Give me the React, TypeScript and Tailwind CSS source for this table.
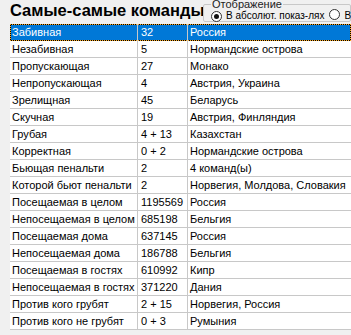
import React from "react";

const rows: [string, string, string][] = [
  ["Забивная", "32", "Россия"],
  ["Незабивная", "5", "Нормандские острова"],
  ["Пропускающая", "27", "Монако"],
  ["Непропускающая", "4", "Австрия, Украина"],
  ["Зрелищная", "45", "Беларусь"],
  ["Скучная", "19", "Австрия, Финляндия"],
  ["Грубая", "4 + 13", "Казахстан"],
  ["Корректная", "0 + 2", "Нормандские острова"],
  ["Бьющая пенальти", "2", "4 команд(ы)"],
  ["Которой бьют пенальти", "2", "Норвегия, Молдова, Словакия"],
  ["Посещаемая в целом", "1195569", "Россия"],
  ["Непосещаемая в целом", "685198", "Бельгия"],
  ["Посещаемая дома", "637145", "Россия"],
  ["Непосещаемая дома", "186788", "Бельгия"],
  ["Посещаемая в гостях", "610992", "Кипр"],
  ["Непосещаемая в гостях", "371220", "Дания"],
  ["Против кого грубят", "2 + 15", "Норвегия, Россия"],
  ["Против кого не грубят", "0 + 3", "Румыния"],
];

function Radio({ checked }: { checked: boolean }) {
  return (
    <span className="inline-flex w-[11px] h-[11px] rounded-full border border-[#333] bg-white items-center justify-center shrink-0">
      {checked && <span className="w-[5px] h-[5px] rounded-full bg-[#111]" />}
    </span>
  );
}

export default function App() {
  return (
    <div
      className="w-[351px] h-[335px] bg-[#f0f0f0] overflow-hidden"
      style={{ fontFamily: '"Liberation Sans", Arial, sans-serif' }}
    >
      <div className="flex h-[23px]">
        <div className="w-[203px] shrink-0 pl-[10px] text-[16.5px] font-bold text-black leading-[20px] whitespace-nowrap">
          Самые-самые команды
        </div>
        <fieldset className="mt-[-1px] h-[23px] flex-1 border border-[#c8c8c8] rounded-[2px] pl-[7px] min-w-0 whitespace-nowrap">
          <legend className="text-[11px] leading-[11px] text-[#222] px-[1px]">Отображение</legend>
          <div className="flex items-center text-[10px] text-black leading-[12px] mt-[-1px]">
            <Radio checked />
            <span className="ml-[4px]">В абсолют. показ-лях</span>
            <span className="ml-[5px]">
              <Radio checked={false} />
            </span>
            <span className="ml-[4px]">В</span>
          </div>
        </fieldset>
      </div>
      <div className="ml-[10px] mt-[1px] bg-white text-[11px] text-black">
        {rows.map((r, i) => {
          const sel = i === 0;
          return (
            <div
              key={i}
              className={
                "flex h-[17px] leading-[16px] whitespace-nowrap " +
                (sel
                  ? "bg-[#0078d7] text-white shadow-[inset_0_0_0_1px_black] outline-1 outline-dotted outline-[#f5a623] -outline-offset-1"
                  : "border-b border-[#c8c8c8]")
              }
            >
              <div className="w-[128px] pl-[2px] border-r border-[#c8c8c8] overflow-hidden">{r[0]}</div>
              <div className="w-[50px] pl-[3px] border-r border-[#c8c8c8] overflow-hidden">{r[1]}</div>
              <div className="flex-1 pl-[2px] overflow-hidden">{r[2]}</div>
            </div>
          );
        })}
      </div>
    </div>
  );
}
